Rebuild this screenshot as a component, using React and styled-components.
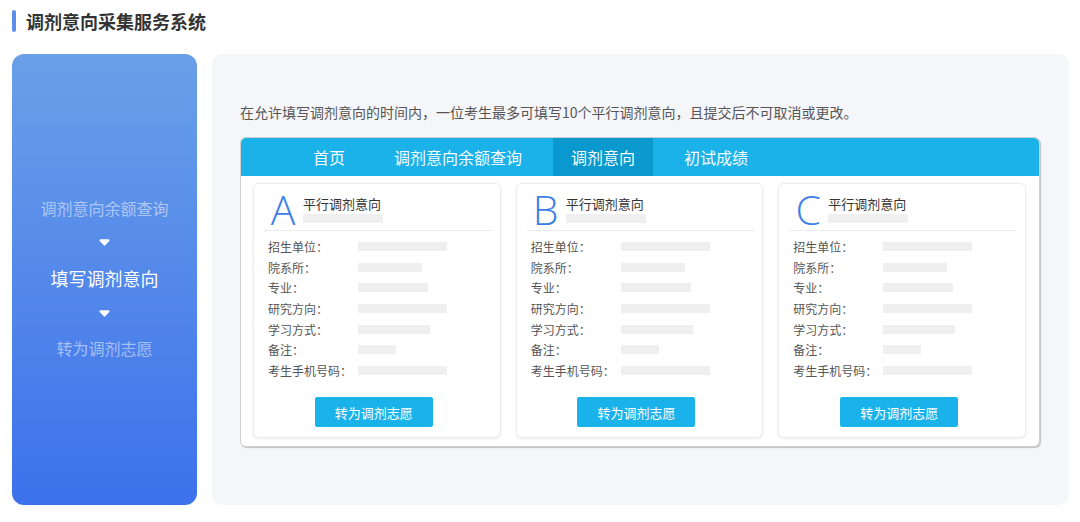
import React from "react";
import styled, { createGlobalStyle } from "styled-components";

const Global = createGlobalStyle`
  html, body { margin: 0; padding: 0; background: #ffffff; }
  body { font-family: "Noto Sans CJK SC", "Noto Sans", sans-serif; }
  * { box-sizing: border-box; }
`;

const Page = styled.div`
  width: 1080px;
  height: 522px;
  padding: 10px 11px 0 12px;
  display: flex;
  flex-direction: column;
`;

const Header = styled.div`
  display: flex;
  align-items: center;
  gap: 10px;
  height: 22px;
`;

const Accent = styled.span`
  width: 4px;
  height: 22px;
  border-radius: 2px;
  background: #5b8fe8;
`;

const Title = styled.h1`
  margin: 0;
  font-size: 18px;
  line-height: 22px;
  font-weight: 700;
  color: #333;
`;

const Main = styled.div`
  margin-top: 22px;
  height: 451px;
  display: flex;
  gap: 15px;
`;

const Steps = styled.div`
  width: 185px;
  border-radius: 12px;
  background: linear-gradient(180deg, #6aa0e8 0%, #3d71ec 100%);
  display: flex;
  flex-direction: column;
  align-items: center;
  justify-content: center;
  gap: 19px;
  padding-bottom: 4px;
`;

const Step = styled.div`
  font-size: ${(p) => (p.$active ? "18px" : "16px")};
  line-height: ${(p) => (p.$active ? "26px" : "24px")};
  color: ${(p) => (p.$active ? "#ffffff" : "rgba(255,255,255,0.5)")};
  white-space: nowrap;
`;

const ArrowIcon = styled.svg`
  display: block;
  width: 11px;
  height: 7px;
`;

const Arrow = () => (
  <ArrowIcon viewBox="0 0 11 7">
    <path
      d="M1.4 0.3 H9.6 A1 1 0 0 1 10.3 1.9 L6.2 6.3 A1 1 0 0 1 4.8 6.3 L0.7 1.9 A1 1 0 0 1 1.4 0.3 Z"
      fill="#ffffff"
    />
  </ArrowIcon>
);

const Panel = styled.div`
  flex: 1;
  border-radius: 10px;
  background: #f5f6fa;
  padding: 48px 0 0 28px;
`;

const Intro = styled.p`
  margin: 0 0 15px;
  font-size: 14px;
  line-height: 20px;
  color: #555;
`;

const Frame = styled.div`
  width: 800px;
  background: #fff;
  border: 1px solid #cfcfcf;
  border-radius: 6px;
  box-shadow: 1px 1px 1px rgba(0, 0, 0, 0.22);
  overflow: hidden;
`;

const Nav = styled.div`
  height: 38px;
  background: #1bb1e9;
  display: flex;
  align-items: stretch;
  gap: 13px;
  padding-left: 54px;
`;

const NavItem = styled.div`
  padding: 0 18px;
  display: flex;
  align-items: center;
  font-size: 16px;
  color: #f4fbff;
  background: ${(p) => (p.$active ? "#0a99cf" : "transparent")};
`;

const Cards = styled.div`
  display: grid;
  grid-template-columns: repeat(3, 1fr);
  gap: 15px;
  padding: 7px 13px 8px 12px;
`;

const Card = styled.div`
  height: 255px;
  background: #fff;
  border: 1px solid #ececec;
  border-radius: 6px;
  box-shadow: 0 1px 3px rgba(0, 0, 0, 0.08);
  padding-top: 5px;
  display: flex;
  flex-direction: column;
`;

const CardHead = styled.div`
  margin: 0 8px 0 10px;
  padding: 0 0 1px 2px;
  border-bottom: 1px solid #ebebeb;
  display: flex;
  gap: 3px;
`;

const Letter = styled.div`
  width: 34px;
  text-align: center;
  font-family: "Open Sans", "Liberation Sans", sans-serif;
  font-weight: 300;
  font-size: 41px;
  line-height: 40px;
  color: #3d7fe6;
`;

const HeadText = styled.div`
  padding-top: 6px;
`;

const CardTitle = styled.div`
  font-size: 13px;
  line-height: 17px;
  color: #333;
`;

const Placeholder = styled.div`
  height: 9px;
  background: #efefef;
`;

const TitleBar = styled(Placeholder)`
  margin-top: 2px;
  width: 80px;
`;

const Rows = styled.div`
  margin: 5px 0 0 14px;
  display: grid;
  grid-template-columns: 90px 1fr;
  grid-auto-rows: 20.7px;
  align-items: center;
`;

const Label = styled.span`
  font-size: 12px;
  color: #555;
  white-space: nowrap;
`;

const Button = styled.button`
  align-self: center;
  margin: auto 6px 10px 0;
  width: 118px;
  height: 30px;
  border: none;
  border-radius: 2px;
  background: #1ab2ea;
  color: #fff;
  font-family: inherit;
  font-size: 13px;
  padding: 0;
`;

const fields = [
  ["招生单位：", 89],
  ["院系所：", 64],
  ["专业：", 70],
  ["研究方向：", 89],
  ["学习方式：", 72],
  ["备注：", 38],
  ["考生手机号码：", 89],
];

const navs = ["首页", "调剂意向余额查询", "调剂意向", "初试成绩"];

export default function App() {
  return (
    <Page>
      <Global />
      <Header>
        <Accent />
        <Title>调剂意向采集服务系统</Title>
      </Header>
      <Main>
        <Steps>
          <Step>调剂意向余额查询</Step>
          <Arrow />
          <Step $active>填写调剂意向</Step>
          <Arrow />
          <Step>转为调剂志愿</Step>
        </Steps>
        <Panel>
          <Intro>
            在允许填写调剂意向的时间内，一位考生最多可填写10个平行调剂意向，且提交后不可取消或更改。
          </Intro>
          <Frame>
            <Nav>
              {navs.map((n) => (
                <NavItem key={n} $active={n === "调剂意向"}>
                  {n}
                </NavItem>
              ))}
            </Nav>
            <Cards>
              {["A", "B", "C"].map((l) => (
                <Card key={l}>
                  <CardHead>
                    <Letter>{l}</Letter>
                    <HeadText>
                      <CardTitle>平行调剂意向</CardTitle>
                      <TitleBar />
                    </HeadText>
                  </CardHead>
                  <Rows>
                    {fields.map(([label, w]) => (
                      <React.Fragment key={label}>
                        <Label>{label}</Label>
                        <Placeholder style={{ width: w }} />
                      </React.Fragment>
                    ))}
                  </Rows>
                  <Button>转为调剂志愿</Button>
                </Card>
              ))}
            </Cards>
          </Frame>
        </Panel>
      </Main>
    </Page>
  );
}
